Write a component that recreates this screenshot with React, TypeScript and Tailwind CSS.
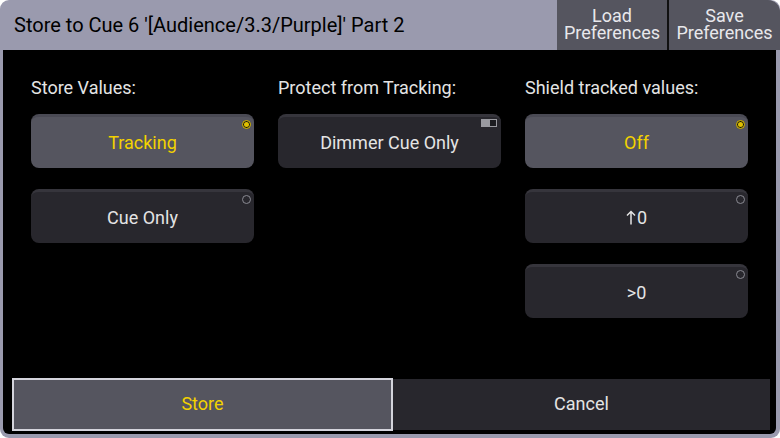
import React from 'react';

type Opt = { label: React.ReactNode; id: string; on?: boolean; kind?: 'radio' | 'toggle' };

function Indicator({ on, kind }: { on?: boolean; kind?: 'radio' | 'toggle' }) {
  if (kind === 'toggle') {
    return (
      <div className="absolute top-[2px] right-[4px] flex h-[8px] w-[16px] border border-[#9a9aa0] bg-[#1c1c20]">
        <div className="h-full w-[8px] bg-[#9a9aa0]" />
      </div>
    );
  }
  return on ? (
    <div className="absolute top-[3px] right-[3px] flex h-[9px] w-[9px] items-center justify-center rounded-full border border-[#e0c000] bg-[#1a1a10]">
      <div className="h-[5px] w-[5px] rounded-full bg-[#e0c000]" />
    </div>
  ) : (
    <div className="absolute top-[3px] right-[3px] h-[9px] w-[9px] rounded-full border border-[#8a8a92]" />
  );
}

function OptButton({ label, on, kind = 'radio' }: Opt) {
  return (
    <div
      className={`relative flex h-[54px] items-center justify-center rounded-[8px] border-t-[3px] text-[18px] ${
        on ? 'bg-[#55555f] border-[#4a4a54] text-[#f2d200]' : 'bg-[#28272d] border-[#36353c] text-[#e4e4e4]'
      }`}
    >
      <Indicator on={on} kind={kind} />
      <span className="flex items-center">{label}</span>
    </div>
  );
}

function Column({ title, options }: { title: string; options: Opt[] }) {
  return (
    <div className="flex w-[223px] flex-col">
      <div className="h-[36px] text-[18px] leading-[20px] text-[#e4e4e4]">{title}</div>
      <div className="flex flex-col gap-[21px]">
        {options.map((o) => (
          <OptButton key={o.id} {...o} />
        ))}
      </div>
    </div>
  );
}

const UpZero = (
  <>
    <svg width="10" height="15" viewBox="0 0 10 15" className="mr-[1px]">
      <path d="M5 14.5V1.5M1 5.5L5 1.5L9 5.5" fill="none" stroke="#e4e4e4" strokeWidth="1.5" />
    </svg>
    0
  </>
);

export default function App() {
  return (
    <div
      className="flex h-[438px] w-[780px] flex-col overflow-hidden rounded-[9px] bg-[#9a9aae]"
      style={{ fontFamily: 'Roboto, "Liberation Sans", sans-serif' }}
    >
      <div className="flex h-[50px] shrink-0">
        <div className="flex flex-1 items-center pl-[14px] text-[20px] text-black">
          Store to Cue 6 '[Audience/3.3/Purple]' Part 2
        </div>
        <div className="flex w-[110px] flex-col items-center justify-center bg-[#55555f] pb-[2px] text-[18px] leading-[17px] text-[#e8e8ec]">
          <span>Load</span>
          <span>Preferences</span>
        </div>
        <div className="w-[2px] bg-[#111]" />
        <div className="flex w-[111px] flex-col items-center justify-center rounded-tr-[12px] bg-[#55555f] pb-[2px] text-[18px] leading-[17px] text-[#e8e8ec]">
          <span>Save</span>
          <span>Preferences</span>
        </div>
      </div>
      <div className="mb-[4px] ml-[3px] mr-[4px] flex flex-1 flex-col rounded-b-[6px] bg-black">
        <div className="flex flex-1 gap-[24px] pl-[28px] pt-[28px]">
          <Column
            title="Store Values:"
            options={[
              { id: 't', label: 'Tracking', on: true },
              { id: 'c', label: 'Cue Only' },
            ]}
          />
          <Column title="Protect from Tracking:" options={[{ id: 'd', label: 'Dimmer Cue Only', kind: 'toggle' }]} />
          <Column
            title="Shield tracked values:"
            options={[
              { id: 'o', label: 'Off', on: true },
              { id: 'u', label: UpZero },
              { id: 'g', label: '>0' },
            ]}
          />
        </div>
        <div className="flex h-[56px] pl-[9px] pr-[6px] pb-[3px]">
          <div className="flex flex-1 items-center justify-center border-2 border-[#d4d4dc] bg-[#55555f] pb-[3px] text-[18px] text-[#f2d200]">
            Store
          </div>
          <div className="my-[1px] flex flex-1 items-center justify-center bg-[#28272d] pb-[3px] text-[18px] text-[#e4e4e4]">
            Cancel
          </div>
        </div>
      </div>
    </div>
  );
}
